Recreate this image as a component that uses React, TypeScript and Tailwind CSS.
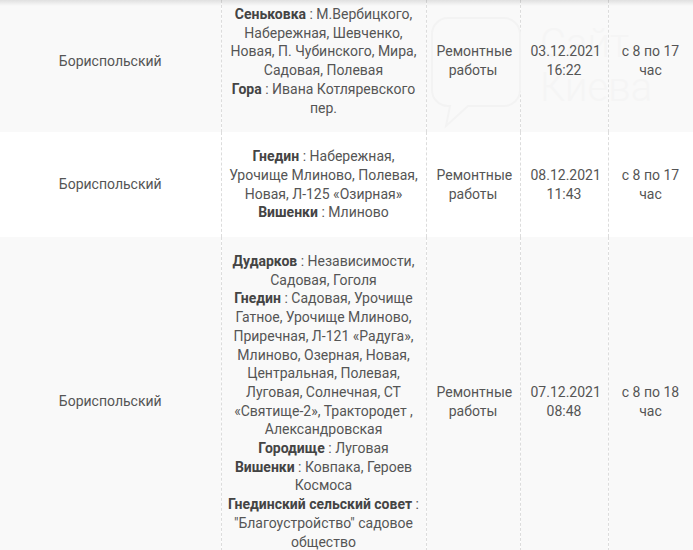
import React from "react";

type Place = { name: string; streets: string };

interface Outage {
	district: string;
	places: Place[];
	reason: string;
	date: string;
	time: string;
	hours: string;
}

const rows: Outage[] = [
	{
		district: "Бориспольский",
		places: [
			{
				name: "Сеньковка",
				streets: "М.Вербицкого, Набережная, Шевченко, Новая, П. Чубинского, Мира, Садовая, Полевая",
			},
			{ name: "Гора", streets: "Ивана Котляревского пер." },
		],
		reason: "Ремонтные работы",
		date: "03.12.2021",
		time: "16:22",
		hours: "с 8 по 17 час",
	},
	{
		district: "Бориспольский",
		places: [
			{
				name: "Гнедин",
				streets: "Набережная, Урочище Млиново, Полевая, Новая, Л-125 «Озирная»",
			},
			{ name: "Вишенки", streets: "Млиново" },
		],
		reason: "Ремонтные работы",
		date: "08.12.2021",
		time: "11:43",
		hours: "с 8 по 17 час",
	},
	{
		district: "Бориспольский",
		places: [
			{ name: "Дударков", streets: "Независимости, Садовая, Гоголя" },
			{
				name: "Гнедин",
				streets:
					"Садовая, Урочище Гатное, Урочище Млиново, Приречная, Л-121 «Радуга», Млиново, Озерная, Новая, Центральная, Полевая, Луговая, Солнечная, СТ «Святище-2», Трактородет , Александровская",
			},
			{ name: "Городище", streets: "Луговая" },
			{ name: "Вишенки", streets: "Ковпака, Героев Космоса" },
			{
				name: "Гнединский сельский совет",
				streets: "\"Благоустройство\" садовое общество",
			},
		],
		reason: "Ремонтные работы",
		date: "07.12.2021",
		time: "08:48",
		hours: "с 8 по 18 час",
	},
];

// td sits above the watermark, tr background stays below it
const cell = "relative z-10 border-x border-dashed border-[#dcdcdc] py-[15px] text-center align-middle";

export default function App() {
	return (
		<div className="relative h-[550px] w-[693px] overflow-hidden bg-white font-['Roboto',sans-serif] text-[14px] leading-[18.7px] text-[#555]">
			<table className="-mt-[10px] w-[693px] table-fixed border-collapse">
				<colgroup>
					<col className="w-[221px]" />
					<col className="w-[205px]" />
					<col className="w-[94px]" />
					<col className="w-[88px]" />
					<col className="w-[85px]" />
				</colgroup>
				<tbody>
					{rows.map((row, i) => (
						<tr key={i} className={i % 2 === 1 ? "bg-white" : "bg-[#f9f9f9]"}>
							<td className={`${cell} border-l-0 px-[10px]`}>{row.district}</td>
							<td className={`${cell} px-[6px]`}>
								{row.places.map((place, j) => (
									<div key={j}>
										<b className="font-bold text-[#444]">{place.name}</b> : {place.streets}
									</div>
								))}
							</td>
							<td className={`${cell} px-[10px]`}>{row.reason}</td>
							<td className={`${cell} px-[10px]`}>
								{row.date}
								<br />
								{row.time}
							</td>
							<td className={`${cell} px-[10px]`}>{row.hours}</td>
						</tr>
					))}
				</tbody>
			</table>

			{/* faint site watermark behind the first row */}
			<div className="pointer-events-none absolute left-[428px] top-[14px] text-[#f3f3f3]">
				<svg width="96" height="116" viewBox="0 0 96 116" fill="none" stroke="currentColor" strokeWidth="2">
					<path d="M20 4h56a16 16 0 0 1 16 16v56a16 16 0 0 1-16 16H40l-22 20 4-20h-2A16 16 0 0 1 4 76V20A16 16 0 0 1 20 4z" />
				</svg>
			</div>
			<div className="pointer-events-none absolute left-[540px] top-[22px] font-['Roboto',sans-serif] text-[40px] font-light leading-[44px] text-[#f5f5f5]">
				Сайт
				<br />
				Киева
			</div>

			<div className="pointer-events-none absolute inset-x-0 top-0 z-20 h-[6px] bg-gradient-to-b from-black/10 to-transparent" />
		</div>
	);
}
